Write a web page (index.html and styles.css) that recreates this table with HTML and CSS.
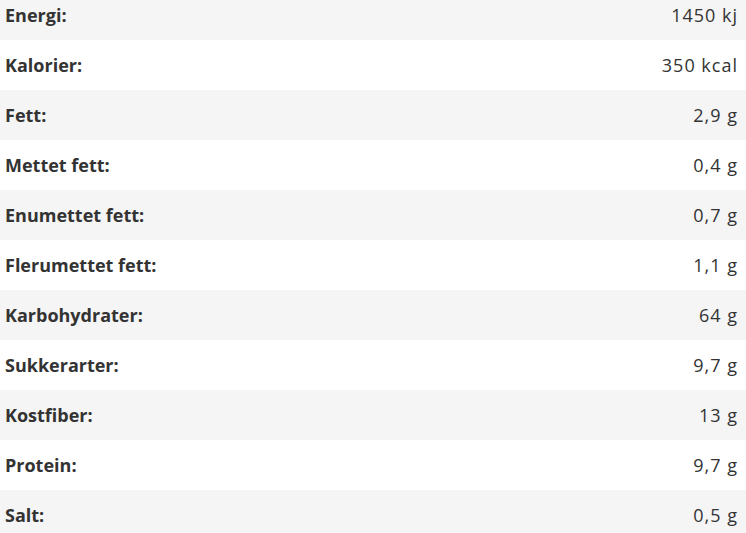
FILE: index.html
```html
<!DOCTYPE html>
<html lang="no">
<head>
<meta charset="utf-8">
<link rel="stylesheet" href="styles.css">
</head>
<body>
<div class="table">
  <div class="row"><span class="label">Energi:</span><span class="value">1450 kj</span></div>
  <div class="row"><span class="label">Kalorier:</span><span class="value">350 kcal</span></div>
  <div class="row"><span class="label">Fett:</span><span class="value">2,9 g</span></div>
  <div class="row"><span class="label">Mettet fett:</span><span class="value">0,4 g</span></div>
  <div class="row"><span class="label">Enumettet fett:</span><span class="value">0,7 g</span></div>
  <div class="row"><span class="label">Flerumettet fett:</span><span class="value">1,1 g</span></div>
  <div class="row"><span class="label">Karbohydrater:</span><span class="value">64 g</span></div>
  <div class="row"><span class="label">Sukkerarter:</span><span class="value">9,7 g</span></div>
  <div class="row"><span class="label">Kostfiber:</span><span class="value">13 g</span></div>
  <div class="row"><span class="label">Protein:</span><span class="value">9,7 g</span></div>
  <div class="row"><span class="label">Salt:</span><span class="value">0,5 g</span></div>
</div>
</body>
</html>
```

FILE: styles.css
```css
html, body {
  margin: 0;
  padding: 0;
  background: #ffffff;
}
body {
  font-family: "Open Sans", "Noto Sans", sans-serif;
  color: #333333;
  font-size: 18px;
  overflow: hidden;
}
.table {
  display: flex;
  flex-direction: column;
  margin-top: -10px;
}
.row {
  display: flex;
  justify-content: space-between;
  align-items: center;
  height: 50px;
  padding: 0 8px 0 5px;
}
.row:nth-child(odd) {
  background: #f5f5f5;
}
.label {
  font-weight: 700;
}
.value {
  font-weight: 400;
  letter-spacing: 1px;
}
```
